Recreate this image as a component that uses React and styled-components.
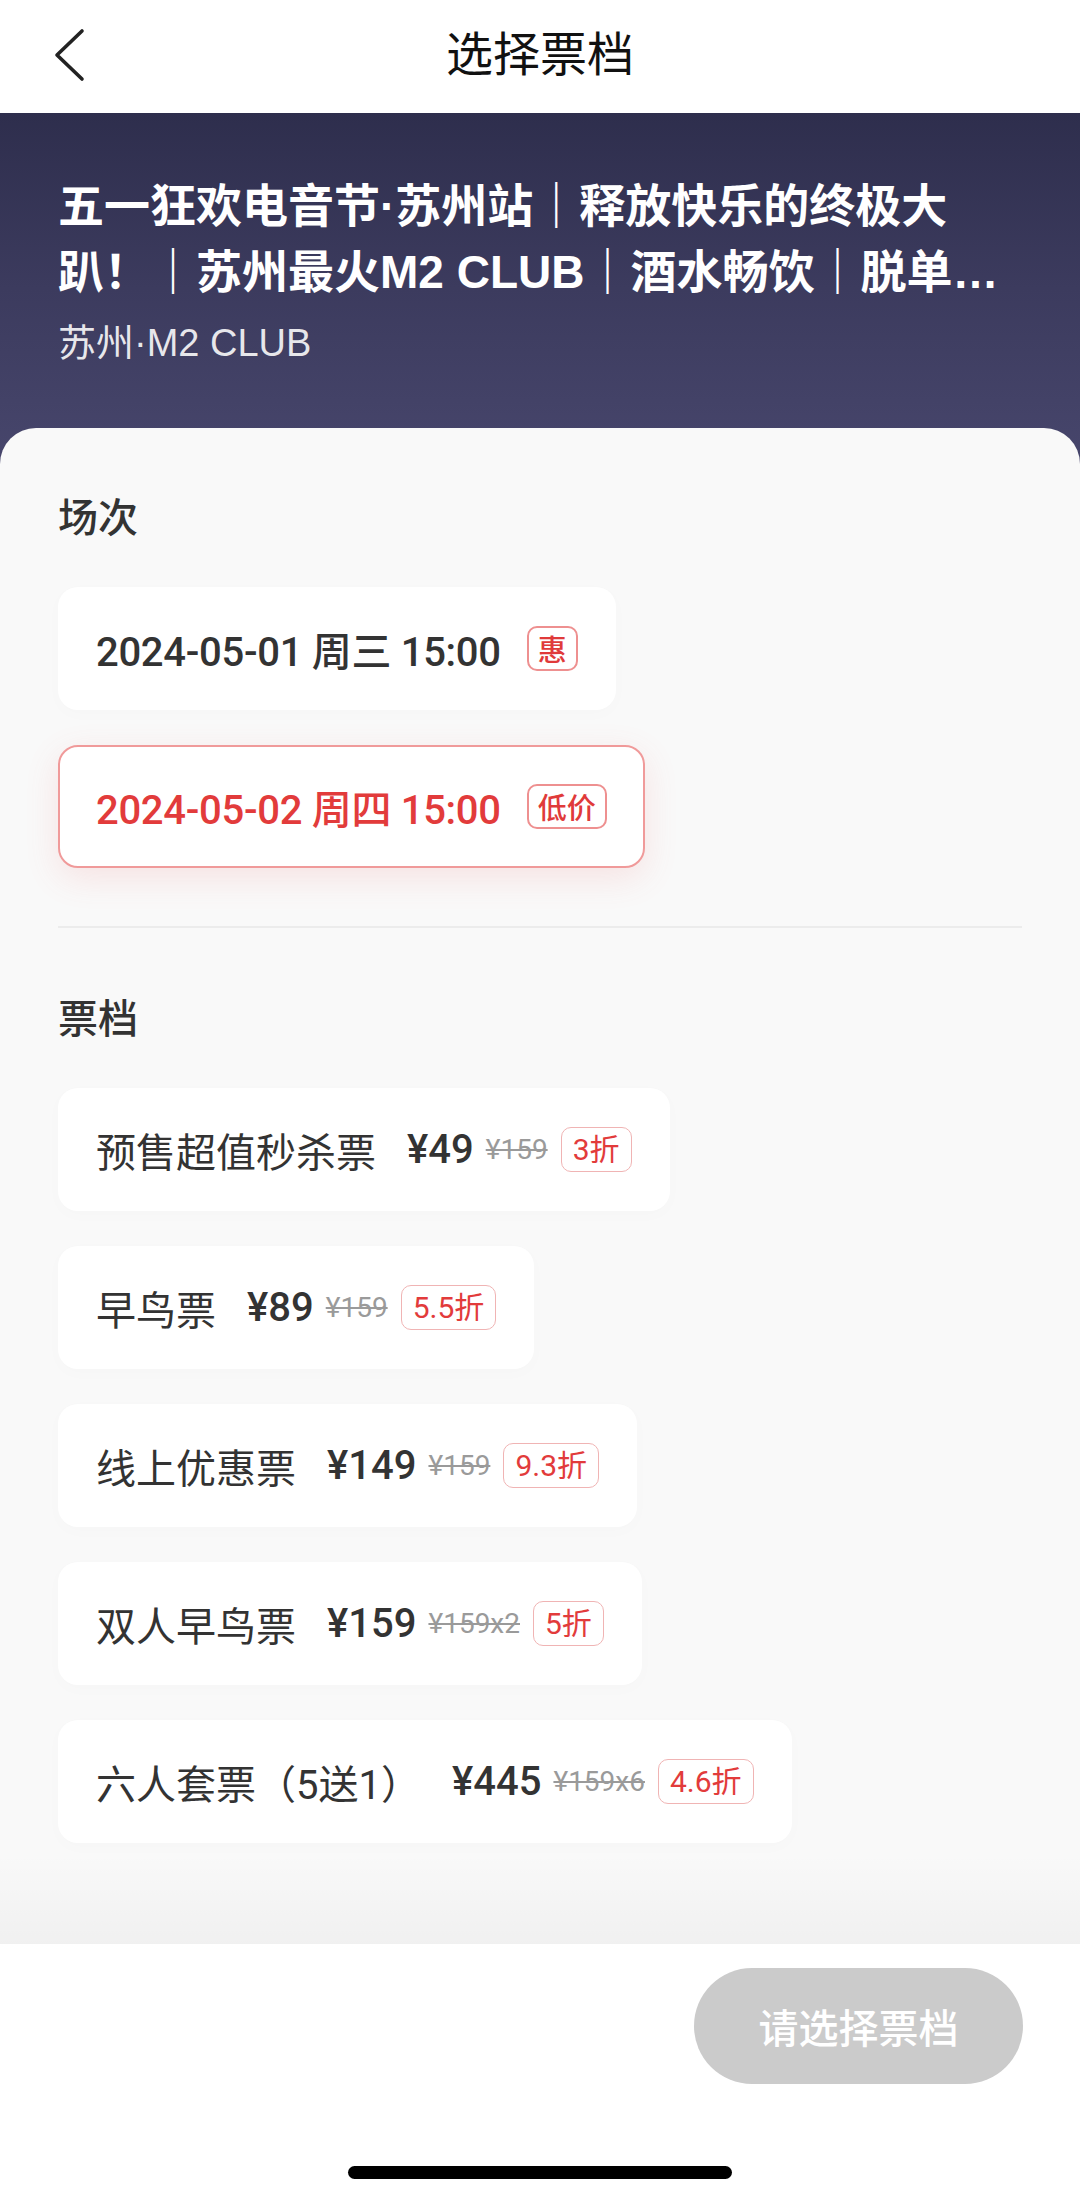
import React from "react";
import styled, { createGlobalStyle } from "styled-components";

const Global = createGlobalStyle`
  html, body { margin: 0; padding: 0; background: #ffffff; }
  body { font-family: "Noto Sans CJK SC", "Noto Sans", sans-serif; -webkit-font-smoothing: antialiased; }
  * { box-sizing: border-box; }
`;

const Page = styled.div`
  width: 1080px;
  height: 2193px;
  display: flex;
  flex-direction: column;
  overflow: hidden;
  background: #f9f9f9;
`;

const Nav = styled.div`
  height: 113px;
  flex: none;
  background: #ffffff;
  display: grid;
  grid-template-columns: 1fr auto 1fr;
  align-items: center;
`;

const Back = styled.div`
  padding-left: 52px;
  display: flex;
  align-items: center;
  height: 100%;
  margin-top: -4px;
`;

const NavTitle = styled.div`
  font-size: 47px;
  color: #111111;
  font-family: "Noto Sans CJK SC", sans-serif;
  font-weight: 400;
  line-height: 1;
  margin-top: -12px;
`;

const Header = styled.div`
  flex: none;
  background: linear-gradient(180deg, #2e2e4d 0%, #3c3b5e 50%, #47466c 100%);
  padding: 60px 58px 97px 58px;
`;

const EventTitle = styled.div`
  color: #ffffff;
  font-family: "Liberation Sans", "Noto Sans CJK SC", sans-serif;
  font-weight: 700;
  font-size: 46px;
  line-height: 66px;
`;

const TitleLine = styled.div`
  white-space: nowrap;
`;

const Venue = styled.div`
  margin-top: 14px;
  color: rgba(255, 255, 255, 0.88);
  font-family: "Liberation Sans", "Noto Sans CJK SC", sans-serif;
  font-size: 38px;
  line-height: 48px;
`;

const Sheet = styled.div`
  flex: 1;
  position: relative;
  margin-top: -36px;
  background: #f9f9f9;
  border-radius: 36px 36px 0 0;
  padding: 61px 58px 0 58px;

  &::after {
    content: "";
    position: absolute;
    left: 0;
    right: 0;
    bottom: 0;
    height: 90px;
    background: linear-gradient(180deg, rgba(0, 0, 0, 0) 0%, rgba(0, 0, 0, 0.035) 100%);
    pointer-events: none;
  }
`;

const SectionTitle = styled.div`
  font-size: 40px;
  line-height: 52px;
  font-weight: 500;
  color: #333333;
  margin-top: ${(p) => p.$top || 0}px;
`;

const List = styled.div`
  margin-top: 46px;
  display: flex;
  flex-direction: column;
  align-items: flex-start;
  gap: 35px;
`;

const Card = styled.div`
  height: 123px;
  display: inline-flex;
  align-items: center;
  padding: 0 36px 0 36px;
  background: #ffffff;
  border-radius: 20px;
  border: 2px solid ${(p) => (p.$active ? "#f09a9a" : "transparent")};
  box-shadow: ${(p) =>
    p.$active
      ? "0 10px 34px rgba(235, 90, 90, 0.14)"
      : "0 4px 18px rgba(0, 0, 0, 0.015)"};
`;

const SessionText = styled.span`
  font-family: "Roboto", "Noto Sans CJK SC", sans-serif;
  font-size: 40px;
  font-weight: 500;
  letter-spacing: -0.3px;
  color: ${(p) => (p.$active ? "#e23b3b" : "#333333")};
  white-space: nowrap;
  margin-right: 26px;
`;

const SessionTag = styled.span`
  height: 45px;
  display: inline-flex;
  align-items: center;
  padding: 0 9px;
  border: 2.5px solid #ee9090;
  border-radius: 10px;
  color: #e03a3a;
  font-size: 29px;
  font-weight: 500;
  line-height: 1;
`;

const Divider = styled.div`
  margin-top: 58px;
  height: 2px;
  background: #ececec;
`;

const TicketName = styled.span`
  font-size: 40px;
  font-weight: 400;
  color: #333333;
  white-space: nowrap;
  margin-right: 31px;
  font-family: "Roboto", "Noto Sans CJK SC", sans-serif;
`;

const Price = styled.span`
  font-family: "Roboto", "Noto Sans CJK SC", sans-serif;
  font-size: 40px;
  font-weight: 500;
  color: #333333;
  margin-right: 12px;
  white-space: nowrap;
`;

const OrigPrice = styled.span`
  font-family: "Roboto", "Noto Sans CJK SC", sans-serif;
  font-size: 28px;
  color: #9a9a9a;
  text-decoration: line-through;
  margin-right: 13px;
  white-space: nowrap;
`;

const Discount = styled.span`
  height: 45px;
  display: inline-flex;
  align-items: center;
  padding: 0 11px;
  border: 1.5px solid #f0b4b4;
  border-radius: 10px;
  color: #e23b3b;
  font-family: "Roboto", "Noto Sans CJK SC", sans-serif;
  font-size: 30px;
  line-height: 1;
  white-space: nowrap;
`;

const BottomBar = styled.div`
  flex: none;
  height: 249px;
  background: #ffffff;
  display: flex;
  flex-direction: column;
  align-items: center;
  padding-top: 24px;
`;

const SubmitButton = styled.div`
  align-self: flex-end;
  margin-right: 57px;
  width: 329px;
  height: 116px;
  border-radius: 58px;
  background: #cbcbcb;
  color: #ffffff;
  font-size: 40px;
  font-weight: 500;
  display: flex;
  align-items: center;
  justify-content: center;
`;

const HomeIndicator = styled.div`
  margin-top: 82px;
  width: 384px;
  height: 13px;
  border-radius: 7px;
  background: #000000;
`;

const sessions = [
  { text: "2024-05-01 周三 15:00", tag: "惠", active: false },
  { text: "2024-05-02 周四 15:00", tag: "低价", active: true },
];

const tickets = [
  { name: "预售超值秒杀票", price: "¥49", orig: "¥159", off: "3折" },
  { name: "早鸟票", price: "¥89", orig: "¥159", off: "5.5折" },
  { name: "线上优惠票", price: "¥149", orig: "¥159", off: "9.3折" },
  { name: "双人早鸟票", price: "¥159", orig: "¥159x2", off: "5折" },
  { name: "六人套票（5送1）", price: "¥445", orig: "¥159x6", off: "4.6折" },
];

export default function App() {
  return (
    <>
      <Global />
      <Page>
        <Nav>
          <Back>
            <svg width="34" height="54" viewBox="0 0 34 54" fill="none">
              <polyline
                points="30,3 5,27 30,51"
                stroke="#222222"
                strokeWidth="3.6"
                strokeLinecap="round"
                strokeLinejoin="round"
              />
            </svg>
          </Back>
          <NavTitle>选择票档</NavTitle>
          <div />
        </Nav>
        <Header>
          <EventTitle>
            <TitleLine>五一狂欢电音节·苏州站｜释放快乐的终极大</TitleLine>
            <TitleLine>趴！｜苏州最火M2 CLUB｜酒水畅饮｜脱单…</TitleLine>
          </EventTitle>
          <Venue>苏州·M2 CLUB</Venue>
        </Header>
        <Sheet>
          <SectionTitle>场次</SectionTitle>
          <List>
            {sessions.map((s) => (
              <Card key={s.text} $active={s.active}>
                <SessionText $active={s.active}>{s.text}</SessionText>
                <SessionTag>{s.tag}</SessionTag>
              </Card>
            ))}
          </List>
          <Divider />
          <SectionTitle $top={62}>票档</SectionTitle>
          <List>
            {tickets.map((t) => (
              <Card key={t.name}>
                <TicketName>{t.name}</TicketName>
                <Price>{t.price}</Price>
                <OrigPrice>{t.orig}</OrigPrice>
                <Discount>{t.off}</Discount>
              </Card>
            ))}
          </List>
        </Sheet>
        <BottomBar>
          <SubmitButton>请选择票档</SubmitButton>
          <HomeIndicator />
        </BottomBar>
      </Page>
    </>
  );
}
